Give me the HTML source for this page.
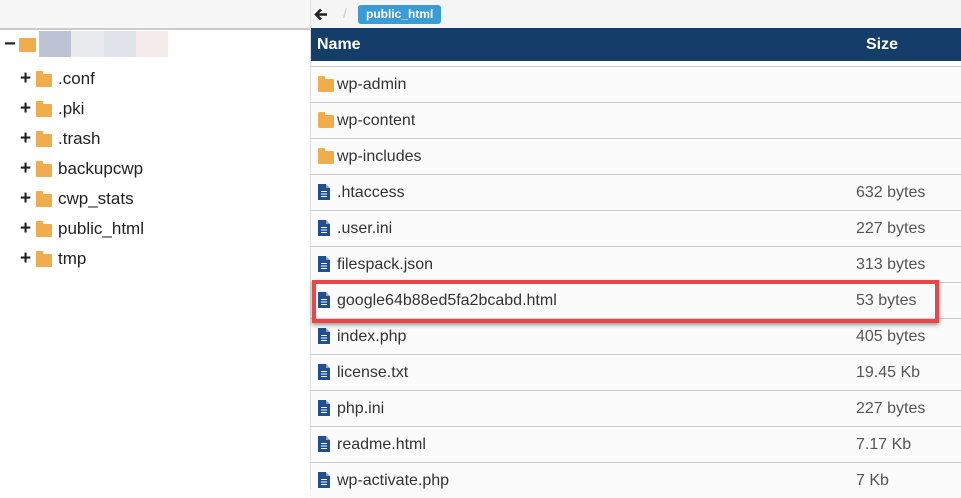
<!DOCTYPE html>
<html><head><style>
body{margin:0;width:961px;height:489px;overflow:hidden;background:#fff;font-family:"Liberation Sans",sans-serif;position:relative;color:#222}
.topl{position:absolute;left:0;top:0;width:310px;height:28px;background:#f7f7f7;border-bottom:2px solid #ccc}
.tr{position:absolute;font-size:17px;height:20px;line-height:20px;white-space:nowrap}
.plus{position:absolute;left:20px;font-weight:bold;font-size:19px}
.fold{position:absolute;width:16px;height:13px;background:#f0ad4e;border-radius:1px}
.fold:before{content:"";position:absolute;left:0;top:-3px;width:7px;height:4px;background:#f0ad4e;border-radius:1px 1px 0 0}
.right{position:absolute;left:310px;top:0;width:651px;height:489px;background:#fff}
.bc{position:absolute;left:0;top:0;width:651px;height:28px;background:#f5f5f5}
.hd{position:absolute;left:0;top:28px;width:651px;height:33px;background:#153d6a;color:#fff;font-weight:bold;font-size:16px}
.row{position:absolute;left:0;width:651px;height:35px;border-top:1px solid #ccc;background:#fbfbfb;font-size:16px;color:#333}
.row .n{position:absolute;left:27px;top:9px}
.row .s{position:absolute;left:546px;top:9px;color:#555}
.row .f{position:absolute;left:8px;top:12px}
.doc{position:absolute;left:8px;top:9px;width:12px;height:16px;background:#1f4f8f}
.doc:before{content:"";position:absolute;right:0;top:0;border-style:solid;border-width:0 4px 4px 0;border-color:#fbfbfb #fbfbfb #8aa6cc #8aa6cc}
.doc:after{content:"";position:absolute;left:3px;top:7px;width:6px;height:6px;background:repeating-linear-gradient(#fff 0 1px,transparent 1px 2.5px)}
</style></head><body>
<div class="topl"></div>
<div class="tr" style="left:4px;top:34px;font-weight:bold;font-size:20px">−</div>
<div style="position:absolute;left:19px;top:38px;width:17px;height:14px;background:#f0ad4e;border-radius:1px"></div>
<div style="position:absolute;left:39px;top:31px;width:32px;height:26px;background:#bdc2d4"></div>
<div style="position:absolute;left:71px;top:31px;width:33px;height:26px;background:#e8eaee"></div>
<div style="position:absolute;left:104px;top:31px;width:32px;height:26px;background:#e0e3ea"></div>
<div style="position:absolute;left:136px;top:31px;width:32px;height:26px;background:#f4ebea"></div>

<div class="tr" style="top:69px;left:0"><span class="plus">+</span><span class="fold" style="left:36px;top:5px"></span><span style="position:absolute;left:58px">.conf</span></div>
<div class="tr" style="top:99px;left:0"><span class="plus">+</span><span class="fold" style="left:36px;top:5px"></span><span style="position:absolute;left:58px">.pki</span></div>
<div class="tr" style="top:129px;left:0"><span class="plus">+</span><span class="fold" style="left:36px;top:5px"></span><span style="position:absolute;left:58px">.trash</span></div>
<div class="tr" style="top:159px;left:0"><span class="plus">+</span><span class="fold" style="left:36px;top:5px"></span><span style="position:absolute;left:58px">backupcwp</span></div>
<div class="tr" style="top:189px;left:0"><span class="plus">+</span><span class="fold" style="left:36px;top:5px"></span><span style="position:absolute;left:58px">cwp_stats</span></div>
<div class="tr" style="top:219px;left:0"><span class="plus">+</span><span class="fold" style="left:36px;top:5px"></span><span style="position:absolute;left:58px">public_html</span></div>
<div class="tr" style="top:249px;left:0"><span class="plus">+</span><span class="fold" style="left:36px;top:5px"></span><span style="position:absolute;left:58px">tmp</span></div>

<div class="right">
<div class="bc">
<svg style="position:absolute;left:4px;top:8px" width="14" height="13" viewBox="0 0 14 13"><path d="M7 1.5L2 6.5L7 11.5M2 6.5H13" fill="none" stroke="#222" stroke-width="2.6"/></svg>
<span style="position:absolute;left:33px;top:5px;color:#ccc;font-size:14px">/</span>
<span style="position:absolute;left:48px;top:5px;height:19px;line-height:19px;padding:0 8px;background:#3a9bd5;color:#fff;font-size:12px;font-weight:bold;border-radius:3px">public_html</span>
</div>
<div class="hd"><span style="position:absolute;left:7px;top:8px">Name</span><span style="position:absolute;left:556px;top:8px">Size</span></div>
<div style="position:absolute;left:0;top:61px;width:651px;height:5px;background:#fff"></div>

<div class="row" style="top:66px"><span class="fold f"></span><span class="n">wp-admin</span></div>
<div class="row" style="top:102px"><span class="fold f"></span><span class="n">wp-content</span></div>
<div class="row" style="top:138px"><span class="fold f"></span><span class="n">wp-includes</span></div>
<div class="row" style="top:174px"><span class="doc"></span><span class="n">.htaccess</span><span class="s">632 bytes</span></div>
<div class="row" style="top:210px"><span class="doc"></span><span class="n">.user.ini</span><span class="s">227 bytes</span></div>
<div class="row" style="top:246px"><span class="doc"></span><span class="n">filespack.json</span><span class="s">313 bytes</span></div>
<div class="row" style="top:282px"><span class="doc"></span><span class="n">google64b88ed5fa2bcabd.html</span><span class="s">53 bytes</span></div>
<div class="row" style="top:318px"><span class="doc"></span><span class="n">index.php</span><span class="s">405 bytes</span></div>
<div class="row" style="top:354px"><span class="doc"></span><span class="n">license.txt</span><span class="s">19.45 Kb</span></div>
<div class="row" style="top:390px"><span class="doc"></span><span class="n">php.ini</span><span class="s">227 bytes</span></div>
<div class="row" style="top:426px"><span class="doc"></span><span class="n">readme.html</span><span class="s">7.17 Kb</span></div>
<div class="row" style="top:462px"><span class="doc"></span><span class="n">wp-activate.php</span><span class="s">7 Kb</span></div>
<div style="position:absolute;left:0;top:0;width:1px;height:489px;background:#ddd"></div>
</div>
<div style="position:absolute;left:312px;top:280px;width:619px;height:35px;border:4px solid #e8474a;box-shadow:0 2px 4px rgba(0,0,0,.4)"></div>
</body></html>
